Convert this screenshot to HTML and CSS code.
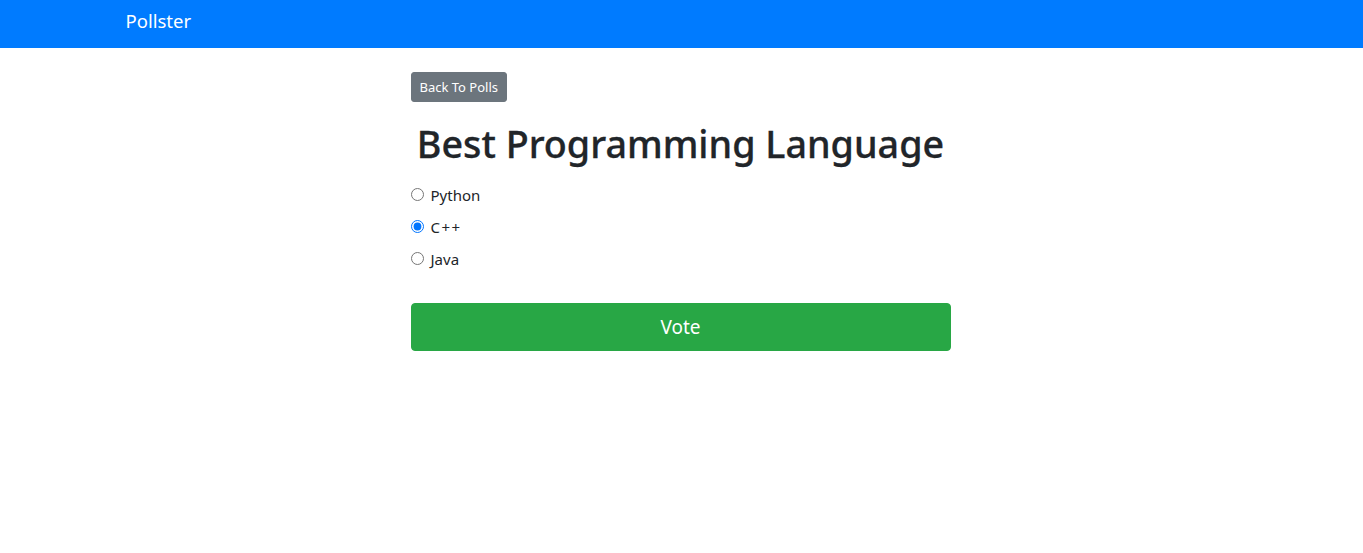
FILE: index.html
```html
<!DOCTYPE html>
<html lang="en">
<head>
<meta charset="utf-8">
<title>Pollster</title>
<link rel="stylesheet" href="styles.css">
</head>
<body>
<nav class="navbar">
  <div class="container">
    <a class="brand" href="#">Pollster</a>
  </div>
</nav>
<main class="container">
  <div class="col">
    <a class="btn btn-back" href="#">Back To Polls</a>
    <h1 class="title">Best Programming Language</h1>
    <form class="poll">
      <div class="form-check">
        <input type="radio" name="choice" id="c1" class="check-input">
        <label for="c1">Python</label>
      </div>
      <div class="form-check">
        <input type="radio" name="choice" id="c2" class="check-input" checked>
        <label for="c2" class="wide">C++</label>
      </div>
      <div class="form-check">
        <input type="radio" name="choice" id="c3" class="check-input">
        <label for="c3">Java</label>
      </div>
      <button type="button" class="btn btn-vote">Vote</button>
    </form>
  </div>
</main>
</body>
</html>
```

FILE: styles.css
```css
* { box-sizing: border-box; }
body {
  margin: 0;
  font-family: "Noto Sans", "Open Sans", sans-serif;
  font-size: 16px;
  line-height: 1.5;
  color: #212529;
  background: #fff;
}
.container {
  width: 1140px;
  margin: 0 auto;
  padding: 0 15px;
}
.navbar {
  background: #007bff;
  height: 48px;
}
.navbar .container {
  display: flex;
  align-items: flex-start;
  height: 48px;
  padding-top: 6px;
}
.brand {
  color: #fff;
  text-decoration: none;
  font-size: 18.5px;
  line-height: 30px;
  margin-left: -1px;
}
.col {
  width: 540px;
  margin-left: 284px;
  padding-top: 24px;
}
.btn {
  display: inline-block;
  border: 1px solid transparent;
  color: #fff;
  text-decoration: none;
  text-align: center;
  font-family: inherit;
}
.btn-back {
  background: #6c757d;
  border-color: #6c757d;
  font-size: 13px;
  line-height: 20px;
  padding: 4px 8px;
  border-radius: 3px;
}
.title {
  margin: 18px 0 15px;
  font-size: 37.7px;
  font-weight: 500;
  line-height: 48px;
  text-align: center;
  -webkit-text-stroke: 0.3px #212529;
}
.poll {
  display: flex;
  flex-direction: column;
  gap: 8px;
}
.form-check {
  position: relative;
  padding-left: 20px;
  line-height: 24px;
  font-size: 15px;
}
.wide { letter-spacing: 1.5px; }
.check-input {
  position: absolute;
  left: 0;
  top: 5px;
  margin: 0;
  width: 13px;
  height: 13px;
}
.btn-vote {
  margin-top: 24px;
  width: 100%;
  background: #28a745;
  border-color: #28a745;
  font-size: 19px;
  line-height: 30px;
  padding: 8px 16px;
  border-radius: 4px;
}
```
